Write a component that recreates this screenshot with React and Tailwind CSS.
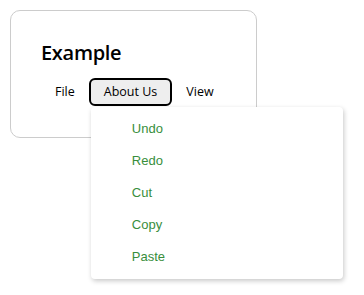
export default function App() {
  const items = ["Undo", "Redo", "Cut", "Copy", "Paste"];
  return (
    <div className="w-[364px] h-[295px] bg-white p-[10px]">
      <div
        className="relative w-[247px] h-[128px] border border-[#cccccc] rounded-[10px] pt-[28px] pl-[30px]"
        style={{ fontFamily: '"Open Sans", sans-serif' }}
      >
        <h1 className="text-[20px] font-semibold leading-[28px] tracking-[-0.3px] text-black">Example</h1>
        <div className="flex items-center mt-[11px] text-[12.5px] text-black">
          <span className="px-[14px] leading-[18px]">File</span>
          <div className="relative">
            <button className="border-2 border-black rounded-[6px] bg-[#eeeeee] px-[13px] py-[3px] leading-[18px] text-[12.5px]">
              About Us
            </button>
            <div
              className="absolute left-[2px] top-full mt-px w-[252px] bg-white rounded-[4px] shadow-[1px_2px_5px_rgba(0,0,0,0.22)] py-1.5 z-10"
              style={{ fontFamily: '"Liberation Sans", Arial, sans-serif' }}
            >
              {items.map((t) => (
                <div key={t} className="h-8 flex items-center pl-[41px] text-[13px] text-[#388e3c]">
                  {t}
                </div>
              ))}
            </div>
          </div>
          <span className="px-[14px] leading-[18px]">View</span>
        </div>
      </div>
    </div>
  );
}
